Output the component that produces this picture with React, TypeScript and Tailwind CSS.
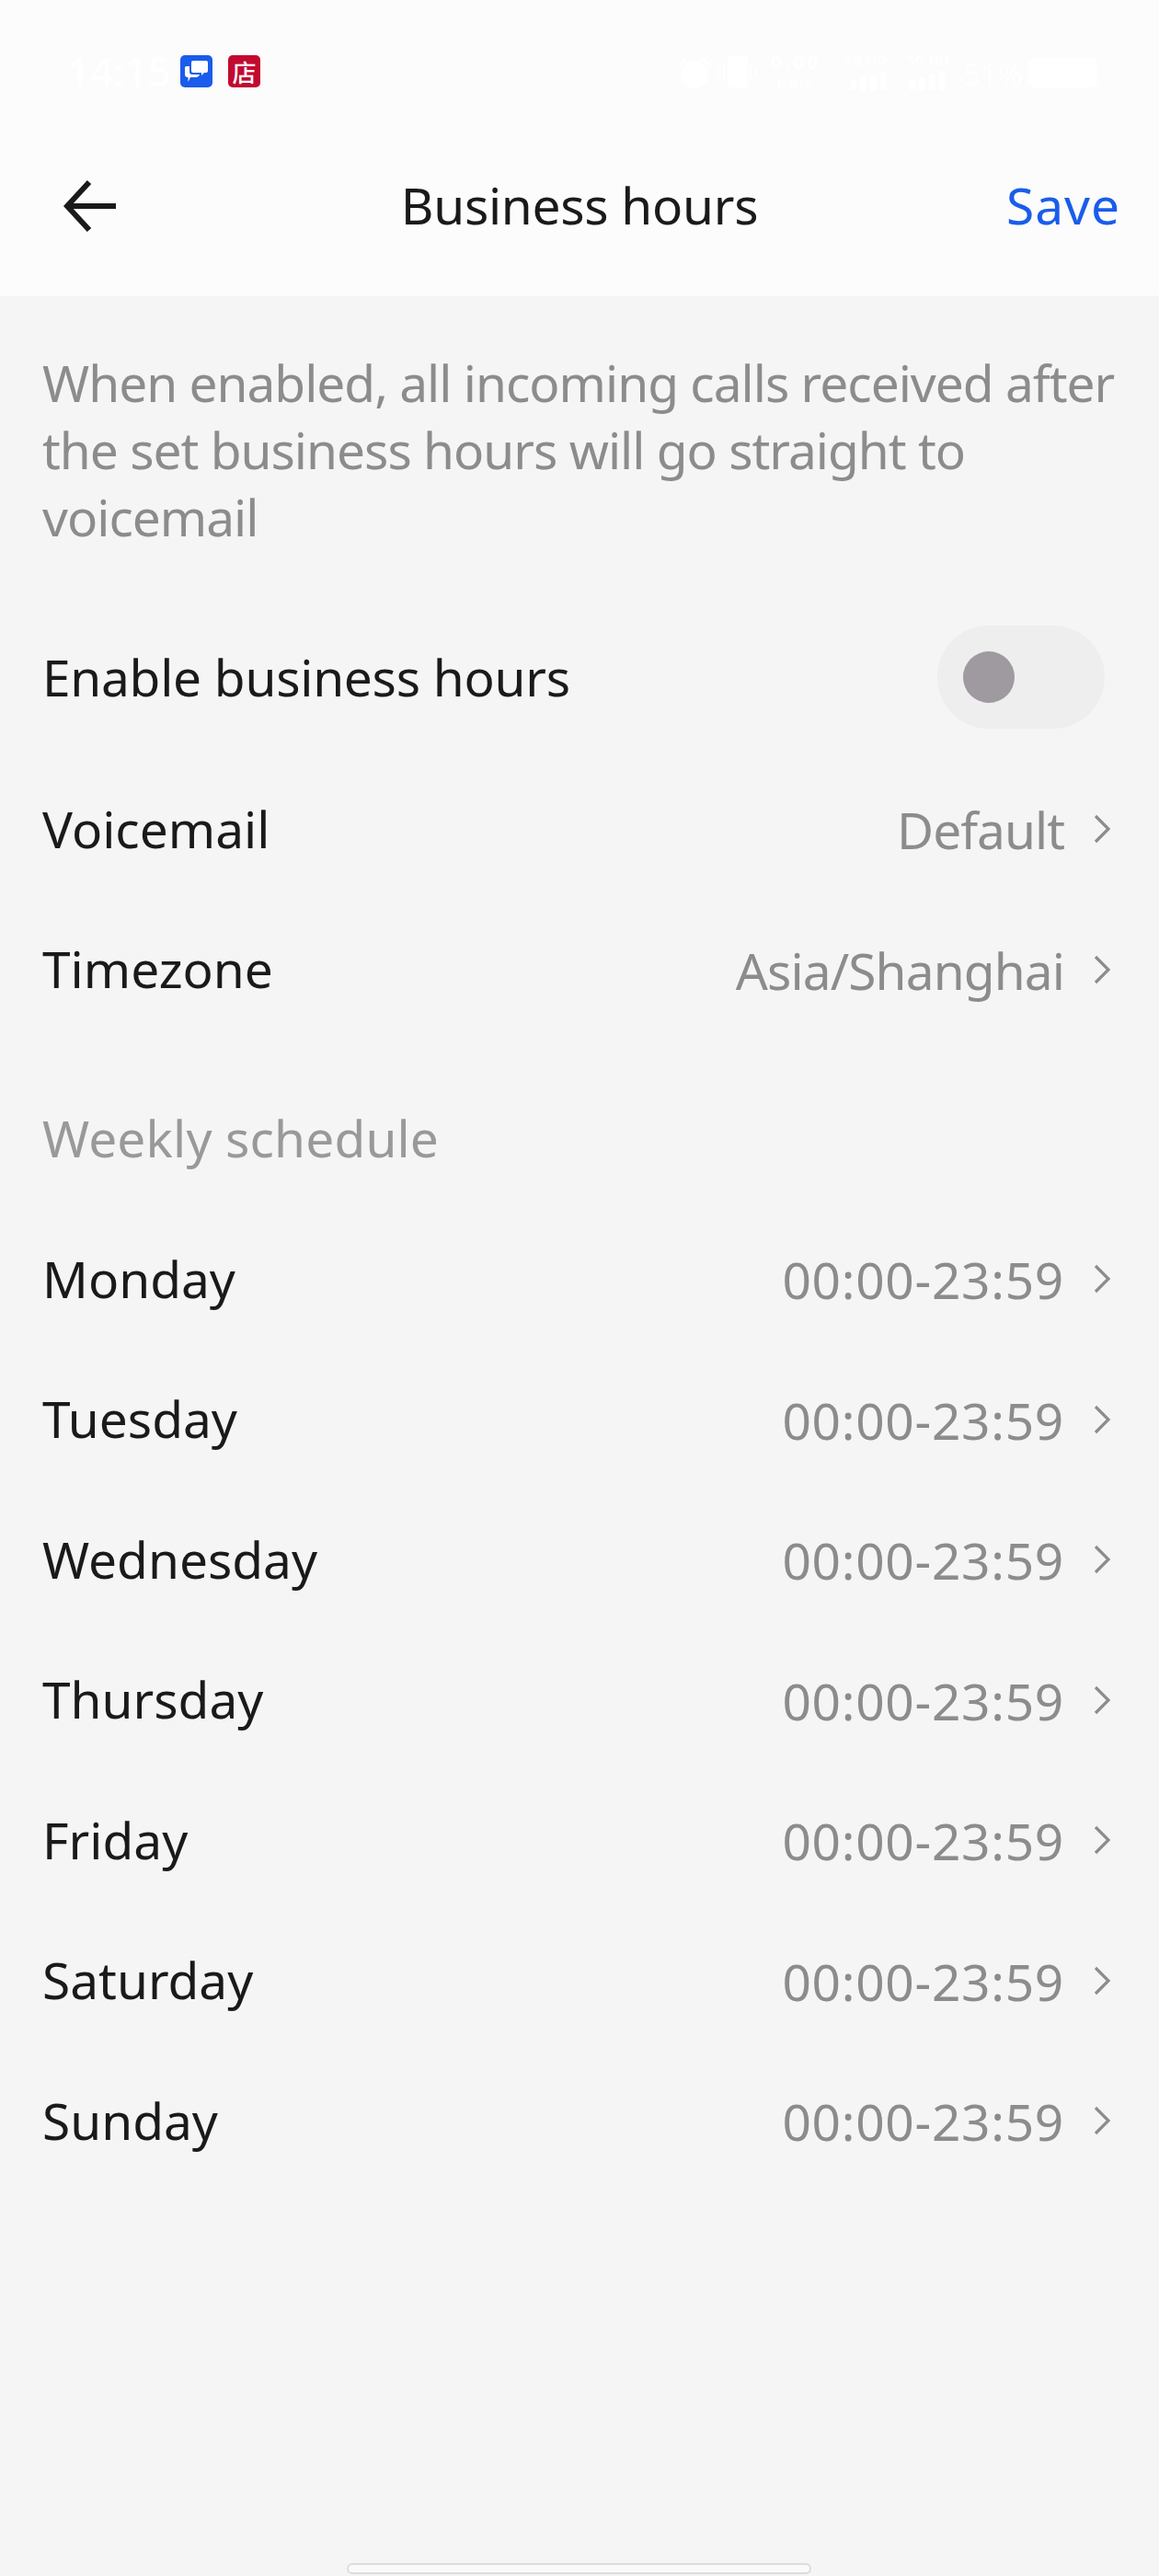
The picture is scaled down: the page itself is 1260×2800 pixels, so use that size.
import React from 'react';

const days = ['Monday', 'Tuesday', 'Wednesday', 'Thursday', 'Friday', 'Saturday', 'Sunday'];

function Chevron() {
  return (
    <svg width="20" height="32" viewBox="0 0 20 32" fill="none" className="ml-[31px] mr-[-1px] mt-[2px]">
      <path d="M3 2 L17 16 L3 30" stroke="#8c8c8c" strokeWidth="3.2" />
    </svg>
  );
}

function Row({ label, value, className, valueClass }: { label: string; value: string; className?: string; valueClass?: string }) {
  return (
    <div className={`flex items-center justify-between h-[152.5px] pl-[46px] pr-[53px] ${className ?? ''}`}>
      <span className="text-[55px] leading-none text-[#1a1a1a] font-normal">{label}</span>
      <div className="flex items-center">
        <span className={`pt-[3px] text-[55px] leading-none text-[#8c8c8c] font-normal ${valueClass ?? 'tracking-[0.7px]'}`}>{value}</span>
        <Chevron />
      </div>
    </div>
  );
}

function SignalBars() {
  return (
    <div className="flex items-end gap-[4px]">
      <div className="w-[7px] h-[12px] bg-white rounded-[2px]" />
      <div className="w-[7px] h-[14px] bg-white rounded-[2px]" />
      <div className="w-[7px] h-[17px] bg-white rounded-[2px]" />
      <div className="w-[7px] h-[20px] bg-white rounded-[2px]" />
    </div>
  );
}

function StatusBar() {
  return (
    <div className="flex items-start justify-between h-[120px] pt-[60px] pl-[73px] pr-[67px] text-white">
      <div className="flex items-center">
        <span className="text-[44px] leading-[35px] font-medium w-[123px]">14:15</span>
        <div className="w-[35px] h-[35px] rounded-[5px] bg-[#1a5ceb] flex items-center justify-center">
          <svg width="25" height="23" viewBox="0 0 25 23" fill="white">
            <path d="M7 2 Q7 0 9 0 H23 Q25 0 25 2 V11 Q25 13 23 13 H21 L18 16 V13 H9 Q7 13 7 11 Z" />
            <path d="M1.500 6 H5 V12 Q5 15 8 15 H16 Q15 18 12 18 H6 L3.500 23 V18 Q0 18 0 15 V7.500 Q0 6 1.500 6 Z" />
          </svg>
        </div>
        <div className="ml-[17px] w-[35px] h-[35px] rounded-[5px] bg-[#c20a30] flex items-center justify-center text-[26px] leading-none font-medium text-white font-['Noto_Sans_CJK_SC',sans-serif]">
          店
        </div>
      </div>
      <div className="flex items-start">
        <svg width="38" height="36" viewBox="0 0 38 36" fill="white" className="mt-[1px]">
          <circle cx="19" cy="20" r="15" />
          <path d="M2 8 L9 2 L11 4 L4 10 Z M36 8 L29 2 L27 4 L34 10 Z" />
        </svg>
        <svg width="43" height="36" viewBox="0 0 43 36" fill="white" className="ml-[6px]">
          <rect x="11" y="0" width="22" height="35" rx="3" />
          <rect x="0" y="13" width="2" height="10" />
          <rect x="6" y="9" width="2" height="18" />
          <rect x="35" y="9" width="2" height="18" />
          <rect x="41" y="13" width="2" height="10" />
        </svg>
        <div className="ml-[15px] mt-[-5px] w-[55px] flex flex-col items-center font-bold font-['Liberation_Sans',sans-serif]">
          <span className="text-[22px] leading-[26px] tracking-[3px]">0.00</span>
          <span className="text-[14px] leading-[20px] tracking-[2px]">KB/s</span>
        </div>
        <div className="ml-[15px] mt-[-3px] w-[56px] flex flex-col items-end font-semibold">
          <span className="text-[15px] leading-[17px] whitespace-nowrap">4G HD</span>
          <div className="mt-[4px]">
            <SignalBars />
          </div>
        </div>
        <div className="ml-[12px] mt-[-3px] w-[56px] flex flex-col items-end font-semibold">
          <span className="text-[15px] leading-[17px] whitespace-nowrap">5G HD</span>
          <div className="mt-[4px] mr-[4px]">
            <SignalBars />
          </div>
        </div>
        <span className="ml-[15px] mt-[6px] text-[33px] leading-[30px] whitespace-nowrap">51%</span>
        <div className="ml-[6px] mt-[3px] w-[75px] h-[32px] rounded-[7px] bg-white" />
      </div>
    </div>
  );
}

export default function App() {
  return (
    <div className="w-[1260px] h-[2800px] relative overflow-hidden bg-[#f5f5f5] font-['Noto_Sans',sans-serif]">
      <div className="h-[322px] bg-[#fcfcfc]">
        <StatusBar />
        <div className="flex items-center justify-between h-[108px] mt-[50px] pl-[69px] pr-[42px] relative">
          <svg width="58" height="58" viewBox="0 0 58 58" fill="none">
            <path d="M28 3 L4 29 L28 55 M4 29 H57" stroke="#1a1a1a" strokeWidth="6" />
          </svg>
          <span className="absolute left-0 right-0 text-center pb-[3px] text-[55px] leading-none text-[#1a1a1a] font-normal tracking-[-0.3px]">
            Business hours
          </span>
          <span className="pb-[3px] text-[55px] leading-none text-[#1a5ceb] font-normal tracking-[1px]">Save</span>
        </div>
      </div>

      <p className="mt-[57px] pl-[46px] pr-[20px] text-[55px] leading-[73px] text-[#8c8c8c] font-normal tracking-[-1px]">
        When enabled, all incoming calls received after<br />the set business hours will go straight to<br />voicemail
      </p>

      <div className="flex items-center justify-between mt-[82px] h-[112px] pl-[46px] pr-[59px]">
        <span className="pb-[2px] text-[55px] leading-none text-[#1a1a1a] font-normal tracking-[-0.27px]">Enable business hours</span>
        <div className="w-[182px] h-[112px] rounded-full bg-[#eeeeee] flex items-center pl-[28px]">
          <div className="w-[56px] h-[56px] rounded-full bg-[#9e9a9f]" />
        </div>
      </div>

      <Row label="Voicemail" value="Default" className="mt-[32px]" valueClass="tracking-[-1px]" />
      <Row label="Timezone" value="Asia/Shanghai" valueClass="tracking-[-0.9px]" />

      <div className="mt-[71px] h-[73px] flex items-center pl-[46px] text-[55px] leading-none text-[#999999] font-normal tracking-[0.15px]">
        Weekly schedule
      </div>

      <div className="mt-[40px]">
        {days.map(day => (
          <Row key={day} label={day} value="00:00-23:59" />
        ))}
      </div>

      <div className="absolute left-[377px] top-[2786px] w-[505px] h-[12px] rounded-full bg-[#fafafa] border-[2px] border-[#dcdcdc]" />
    </div>
  );
}
